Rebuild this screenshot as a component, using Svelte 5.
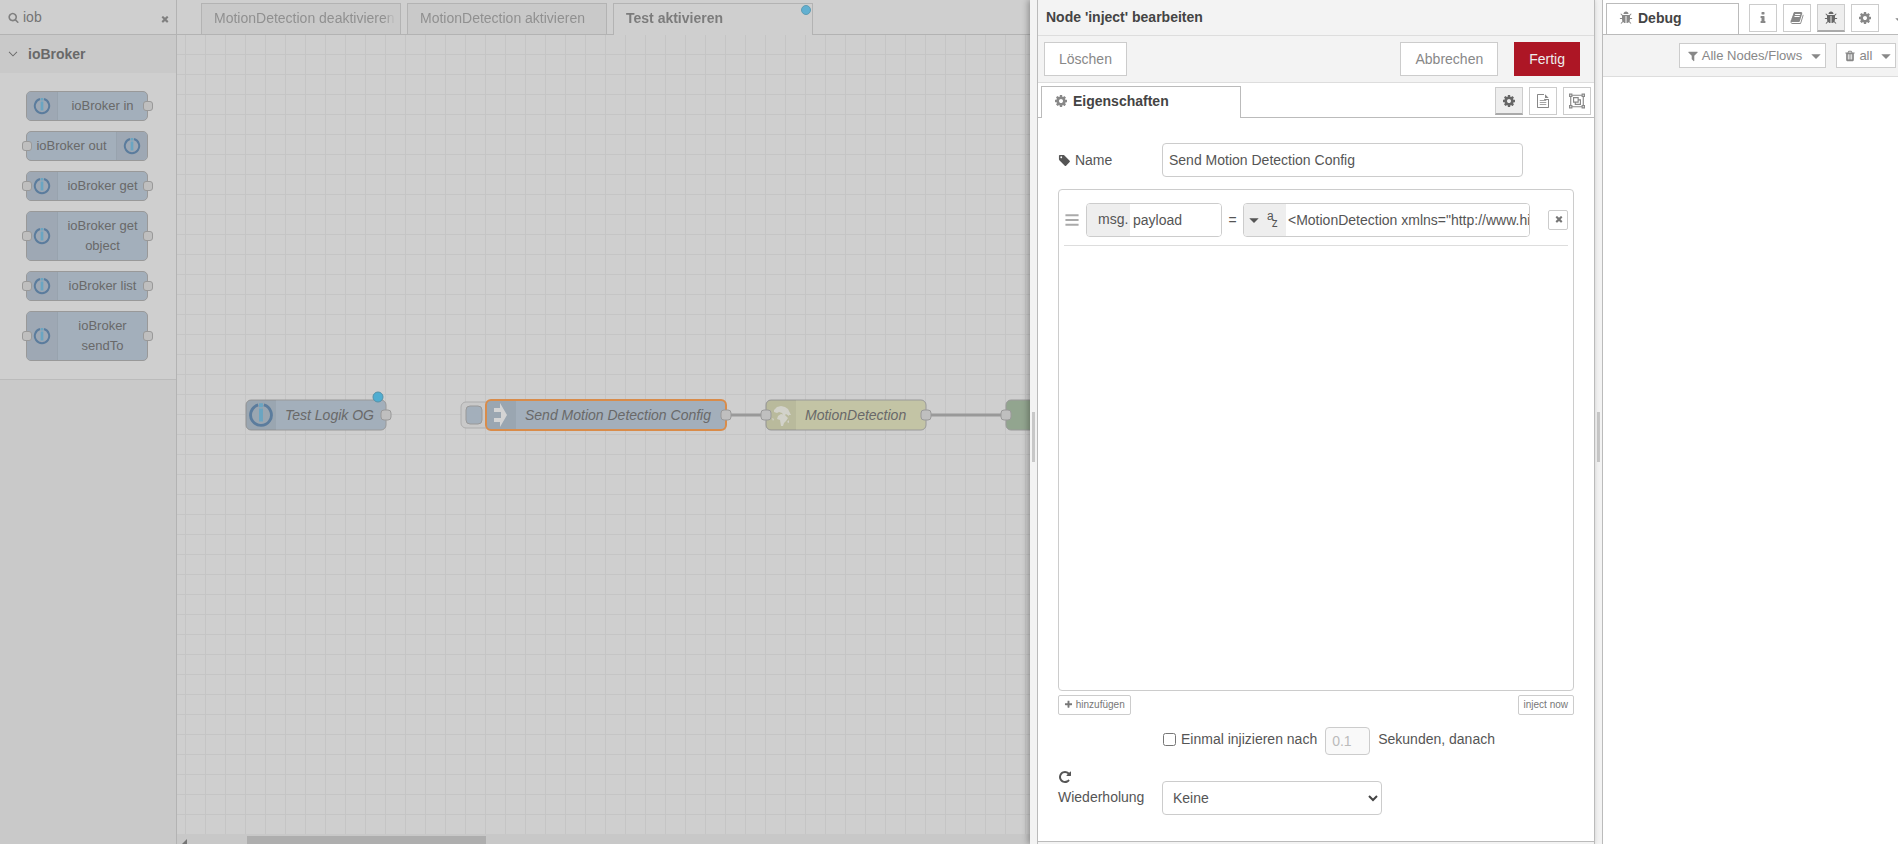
<script>
  const paths = {
    search:
      "M1216 832q0-185-131.5-316.5t-316.5-131.5-316.5 131.5-131.5 316.5 131.5 316.5 316.5 131.5 316.5-131.5 131.5-316.5zm512 832q0 52-38 90t-90 38q-54 0-90-38l-343-342q-179 124-399 124-143 0-273.5-55.5t-225-150-150-225-55.5-273.5 55.5-273.5 150-225 225-150 273.5-55.5 273.5 55.5 225 150 150 225 55.5 273.5q0 220-124 399l343 343q37 37 37 90z",
    times:
      "M1490 1322q0 40-28 68l-136 136q-28 28-68 28t-68-28l-294-294-294 294q-28 28-68 28t-68-28l-136-136q-28-28-28-68t28-68l294-294-294-294q-28-28-28-68t28-68l136-136q28-28 68-28t68 28l294 294 294-294q28-28 68-28t68 28l136 136q28 28 28 68t-28 68l-294 294 294 294q28 28 28 68z",
    cog: "M1152 896q0-106-75-181t-181-75-181 75-75 181 75 181 181 75 181-75 75-181zm512-109v222q0 12-8 23t-20 13l-185 28q-19 54-39 91 35 50 107 138 10 12 10 25t-9 23q-27 37-99 108t-94 71q-12 0-26-9l-138-108q-44 23-91 38-16 136-29 186-7 28-36 28h-222q-14 0-24.5-8.5t-11.5-21.5l-28-184q-49-16-90-37l-141 107q-10 9-25 9-14 0-25-11-126-114-165-168-7-10-7-23 0-12 8-23 15-21 51-66.5t54-70.5q-27-50-41-99l-183-27q-13-2-21-12.5t-8-23.5v-222q0-12 8-23t19-13l186-28q14-46 39-92-40-57-107-138-10-12-10-24 0-10 9-23 26-36 98.5-107.5t94.5-71.5q13 0 26 10l138 107q44-23 91-38 16-136 29-186 7-28 36-28h222q14 0 24.5 8.5t11.5 21.5l28 184q49 16 90 37l142-107q9-9 24-9 13 0 25 10 129 119 165 170 7 8 7 22 0 12-8 23-15 21-51 66.5t-54 70.5q26 50 41 98l183 28q13 2 21 12.5t8 23.5z",
    file: "M1596 476q14 14 28 36h-472v-472q22 14 36 28zm-476 164h544v1056q0 40-28 68t-68 28h-1344q-40 0-68-28t-28-68v-1600q0-40 28-68t68-28h800v544q0 40 28 68t68 28zm-864 1024h1280v-896h-416q-40 0-68-28t-28-68v-544h-768zM480 800h832v96h-832zM480 1056h832v96h-832zM480 1312h832v96h-832z",
    group:
      "M0 64h384v128h1024v-128h384v384h-128v896h128v384h-384v-128h-1024v128h-384v-384h128v-896h-128zM128 192v128h128v-128zM1536 192v128h128v-128zM128 1472v128h128v-128zM1536 1472v128h128v-128zM384 320v128h-128v896h128v128h1024v-128h128v-896h-128v-128zM448 448h640v256h256v640h-704v-256h-192zM576 576v384h384v-384zM1088 832v256h-320v128h448v-384z",
    tag: "M576 448q0-53-37.5-90.5t-90.5-37.5-90.5 37.5-37.5 90.5 37.5 90.5 90.5 37.5 90.5-37.5 37.5-90.5zm1067 576q0 53-37 90l-491 492q-39 37-91 37-53 0-90-37l-715-716q-38-37-64.5-101t-26.5-117v-416q0-52 38-90t90-38h416q53 0 117 26.5t102 64.5l715 714q37 39 37 91z",
    plus: "M1600 736v192q0 40-28 68t-68 28h-416v416q0 40-28 68t-68 28h-192q-40 0-68-28t-28-68v-416h-416q-40 0-68-28t-28-68v-192q0-40 28-68t68-28h416v-416q0-40 28-68t68-28h192q40 0 68 28t28 68v416h416q40 0 68 28t28 68z",
    repeat:
      "M1664 256v448q0 26-19 45t-45 19h-448q-42 0-59-40-17-39 14-69l138-138q-148-137-349-137-104 0-198.5 40.5t-163.5 109.5-109.5 163.5-40.5 198.5 40.5 198.5 109.5 163.5 163.5 109.5 198.5 40.5q119 0 225-52t179-147q7-10 23-12 15 0 25 9l137 138q9 8 9.5 20.5t-7.5 22.5q-109 132-264 204.5t-327 72.5q-156 0-298-61t-245-164-164-245-61-298 61-298 164-245 245-164 298-61q147 0 284.5 55.5t244.5 156.5l130-129q29-31 70-14 39 17 39 59z",
    bars: "M160 256h1472v224h-1472zM160 784h1472v224h-1472zM160 1312h1472v224h-1472z",
    bug: "M1696 960q0 26-19 45t-45 19h-224q0 171-67 290l208 209q19 19 19 45t-19 45q-18 19-45 19t-45-19l-198-197q-5 5-15 13t-42 28.5-65 36.5-82 29-97 13v-896h-128v896q-51 0-101.5-13.5t-87-33-66-39-43.5-32.5l-15-14-183 207q-20 21-48 21-24 0-43-16-19-18-20.5-44.5t15.5-46.5l202-227q-58-114-58-274h-224q-26 0-45-19t-19-45 19-45 45-19h224v-294l-173-173q-19-19-19-45t19-45 45-19 45 19l173 173h844l173-173q19-19 45-19t45 19 19 45-19 45l-173 173v294h224q26 0 45 19t19 45zm-480-576h-640q0-133 93.5-226.5t226.5-93.5 226.5 93.5 93.5 226.5z",
    info: "M1216 1344v128q0 26-19 45t-45 19h-512q-26 0-45-19t-19-45v-128q0-26 19-45t45-19h64v-384h-64q-26 0-45-19t-19-45v-128q0-26 19-45t45-19h384q26 0 45 19t19 45v576h64q26 0 45 19t19 45zm-128-1152v192q0 26-19 45t-45 19h-256q-26 0-45-19t-19-45v-192q0-26 19-45t45-19h256q26 0 45 19t19 45z",
    book: "M1703 478q40 57 18 129l-275 906q-19 64-76.5 107.5t-122.5 43.5h-923q-77 0-148.5-53.5t-99.5-131.5q-24-67-2-127 0-4 3-27t4-37q1-8-3-21.5t-3-19.5q2-11 8-21t16.5-23.5 16.5-23.5q23-38 45-91.5t30-91.5q3-10 .5-30t-.5-28q3-11 17-28t17-23q21-36 42-92t25-90q1-9-2.5-32t.5-28q4-13 22-30.5t22-22.5q19-26 42.5-84.5t27.5-96.5q1-8-3-25.5t-2-26.5q2-8 9-18t18-23 17-21q8-12 16.5-30.5t15-35 16-36 19.5-32 26.5-23.5 36-11.5 47.5 5.5l-1 3q38-9 51-9h761q74 0 114 56t18 130l-274 906q-36 119-71.5 153.5t-128.5 34.5h-869q-27 0-38 15-11 16-1 43 24 70 144 70h923q29 0 56-15.5t35-41.5l300-987q7-22 5-57 38 15 59 43zm-1064 2q-4 13 2 22.5t20 9.5h608q13 0 25.5-9.5t16.5-22.5l21-64q4-13-2-22.5t-20-9.5h-608q-13 0-25.5 9.5t-16.5 22.5zm-83 256q-4 13 2 22.5t20 9.5h608q13 0 25.5-9.5t16.5-22.5l21-64q4-13-2-22.5t-20-9.5h-608q-13 0-25.5 9.5t-16.5 22.5z",
    filter:
      "M1595 295q17 41-14 70l-493 493v742q0 42-39 59-13 5-25 5-27 0-45-19l-256-256q-19-19-19-45v-486l-493-493q-31-29-14-70 17-39 59-39h1280q42 0 59 39z",
    trash:
      "M704 1376v-704q0-14-9-23t-23-9h-64q-14 0-23 9t-9 23v704q0 14 9 23t23 9h64q14 0 23-9t9-23zm256 0v-704q0-14-9-23t-23-9h-64q-14 0-23 9t-9 23v704q0 14 9 23t23 9h64q14 0 23-9t9-23zm256 0v-704q0-14-9-23t-23-9h-64q-14 0-23 9t-9 23v704q0 14 9 23t23 9h64q14 0 23-9t9-23zm-544-992h448l-48-117q-7-9-17-11h-317q-10 2-17 11zm928 32v64q0 14-9 23t-23 9h-96v948q0 83-47 143.5t-113 60.5h-832q-66 0-113-58.5t-47-141.5v-952h-96q-14 0-23-9t-9-23v-64q0-14 9-23t23-9h309l70-167q15-37 54-63t79-26h320q40 0 79 26t54 63l70 167h309q14 0 23 9t9 23z",
    caret: "M192 640h1408l-704 704z",
    angle: "M256 620l90-90 550 550 550-550 90 90-640 640z",
  };

  let paletteNodes = [
    { label: "ioBroker in", input: false, output: true },
    { label: "ioBroker out", input: true, output: false, right: true },
    { label: "ioBroker get", input: true, output: true },
    { label: "ioBroker get object", input: true, output: true },
    { label: "ioBroker list", input: true, output: true },
    { label: "ioBroker sendTo", input: true, output: true },
  ];

  let flowTabs = ["MotionDetection deaktivieren", "MotionDetection aktivieren", "Test aktivieren"];
  let activeTab = 2;

  let search = "iob";
  let name = "Send Motion Detection Config";
  let property = "payload";
  let value = '<MotionDetection xmlns="http://www.hikvision.com/ver20/XMLSchema">';
  let once = false;
  let onceDelay = "0.1";
  let repeat = "none";

  let editTab = "cog";
  let sideTab = "bug";
</script>

{#snippet icon(id, size = 14)}
  <svg class="icon" width={size} height={size} viewBox="0 0 1792 1792" aria-hidden="true">
    <path d={paths[id]} fill="currentColor" fill-rule={id === "group" || id === "file" ? "evenodd" : "nonzero"} />
  </svg>
{/snippet}

{#snippet ring()}
  <path d="M7.800 2.300a8 8 0 1 0 4.400 0" fill="none" stroke="#5b7c9d" stroke-width="2.200" />
  <path d="M10 1v3M10 5v10" stroke="#6aa5c2" stroke-width="3" />
{/snippet}

{#snippet port(x)}
  <rect class="port" {x} y="375" width="10" height="10" rx="3" />
{/snippet}

<div class="editor">
  <aside class="palette">
    <div class="search">
      {@render icon("search", 11)}
      <input type="text" aria-label="Nodes filtern" bind:value={search} />
      <button aria-label="Filter leeren" on:click={() => (search = "")}>{@render icon("times", 10)}</button>
    </div>
    <div class="category">
      <button class="category-title">{@render icon("angle", 12)}<span>ioBroker</span></button>
      <div class="category-nodes">
        {#each paletteNodes as node}
          <div class="node" class:right={node.right}>
            <div class="node-icon">
              <svg width="18" height="18" viewBox="0 0 20 20">{@render ring()}</svg>
            </div>
            <div class="node-label">{node.label}</div>
            {#if node.input}<span class="node-port in"></span>{/if}
            {#if node.output}<span class="node-port out"></span>{/if}
          </div>
        {/each}
      </div>
    </div>
  </aside>

  <main class="workspace">
    <nav class="tabs">
      {#each flowTabs as tab, i}
        <button class="tab" class:active={i === activeTab} on:click={() => (activeTab = i)}>
          <span>{tab}</span>
          {#if i === 2}<i class="changed"></i>{/if}
        </button>
      {/each}
    </nav>
    <div class="canvas">
      <svg class="flow" width="100%" height="100%">
        <path class="wire" d="M550 380H589M750 380H829" />

        <g>
          <rect class="body blue" x="69" y="365" width="140" height="30" rx="5" />
          <path class="shade" d="M74 365h25v30h-25a5 5 0 0 1-5-5v-20a5 5 0 0 1 5-5z" />
          <svg x="71" y="367" width="26" height="26" viewBox="0 0 20 20">{@render ring()}</svg>
          <text x="108" y="385">Test Logik OG</text>
          {@render port(204)}
          <circle class="dot" cx="201" cy="362" r="5" />
        </g>

        <g>
          <rect class="button-frame" x="284" y="367" width="32" height="26" rx="5" />
          <rect class="body blue" x="289" y="371" width="16" height="18" rx="4" />
          <rect class="body blue selected" x="309" y="365" width="240" height="30" rx="5" />
          <path class="shade" d="M314 366h25v28h-25a4 4 0 0 1-4-4v-20a4 4 0 0 1 4-4z" />
          <path d="M317 373h6v-5l7 12-7 12v-5h-6v-4h7v-6h-7z" fill="#d4d4d4" />
          <text x="348" y="385">Send Motion Detection Config</text>
          {@render port(544)}
        </g>

        <g>
          <rect class="body yellow" x="589" y="365" width="160" height="30" rx="5" />
          <path class="shade" d="M594 365h25v30h-25a5 5 0 0 1-5-5v-20a5 5 0 0 1 5-5z" />
          <path
            d="M597 375l3-3 4-1 4 1 3 2 3 6-2 0 0 1-3-2-2 2-2-3-3-1-2 1-3-1zM601 381l3-2 4 1 3 3-2 3-2 2-1 3-2 0-1-6-3-1zM595 383l2 1-1 2zM610 387l2-2 0 3z"
            fill="#d2d2ca"
          />
          <text x="628" y="385">MotionDetection</text>
          {@render port(584)}
          {@render port(744)}
        </g>

        <g>
          <rect class="body green" x="829" y="365" width="140" height="30" rx="5" />
          {@render port(824)}
        </g>
      </svg>
    </div>
    <div class="scrollbar">
      <span class="scroll-arrow"></span>
      <span class="thumb"></span>
    </div>
  </main>

  <section class="tray">
    <div class="grip"><span></span></div>
    <div class="tray-main">
      <header class="tray-header">Node 'inject' bearbeiten</header>
      <div class="tray-toolbar">
        <button class="btn delete">Löschen</button>
        <button class="btn">Abbrechen</button>
        <button class="btn primary">Fertig</button>
      </div>
      <div class="panel-tabs edit-tabs">
        <button class="panel-tab">{@render icon("cog")}Eigenschaften</button>
        <div class="tab-icons">
          {#each ["cog", "file", "group"] as id}
            <button class="square" class:on={editTab === id} aria-label={id} on:click={() => (editTab = id)}>
              {@render icon(id, id === "group" ? 16 : 14)}
            </button>
          {/each}
        </div>
      </div>

      <form class="tray-body" on:submit|preventDefault>
        <div class="form-row">
          <label class="caption" for="node-name">{@render icon("tag", 13)} Name</label>
          <input id="node-name" class="field name" type="text" bind:value={name} />
        </div>

        <div class="rules">
          <div class="rule">
            <span class="drag">{@render icon("bars", 16)}</span>
            <div class="field typed prop">
              <span class="type">msg.</span>
              <input type="text" aria-label="Eigenschaft" bind:value={property} />
            </div>
            <span class="equals">=</span>
            <div class="field typed val">
              <button class="type" type="button" aria-label="Typ">
                {@render icon("caret", 12)}
                <span class="az"><span>a</span><span>z</span></span>
              </button>
              <input type="text" aria-label="Wert" bind:value />
            </div>
            <button class="small remove" type="button" aria-label="Entfernen">{@render icon("times", 10)}</button>
          </div>
        </div>

        <div class="list-actions">
          <button class="small" type="button">{@render icon("plus", 9)} hinzufügen</button>
          <button class="small" type="button">inject now</button>
        </div>

        <div class="once">
          <input id="once" type="checkbox" bind:checked={once} />
          <label for="once">Einmal injizieren nach</label>
          <input id="delay" class="field delay" type="text" disabled={!once} bind:value={onceDelay} />
          <label for="delay">Sekunden, danach</label>
        </div>

        <div class="form-row repeat">
          <label class="caption" for="repeat">{@render icon("repeat")}<br />Wiederholung</label>
          <div class="select">
            <select id="repeat" class="field" bind:value={repeat}>
              <option value="none">Keine</option>
              <option value="interval">Intervall</option>
            </select>
            <svg width="10" height="8" viewBox="0 0 10 8" aria-hidden="true">
              <path d="M1 2l4 4 4-4" fill="none" stroke="#444" stroke-width="2" />
            </svg>
          </div>
        </div>
      </form>
      <footer class="tray-footer"></footer>
    </div>
  </section>

  <div class="grip"><span></span></div>

  <aside class="sidebar">
    <div class="panel-tabs side-tabs">
      <button class="panel-tab">{@render icon("bug")}Debug</button>
      <div class="tab-icons">
        {#each ["info", "book", "bug", "cog"] as id}
          <button class="square" class:on={sideTab === id} aria-label={id} on:click={() => (sideTab = id)}>
            {@render icon(id)}
          </button>
        {/each}
      </div>
      <button class="more" aria-label="Mehr">{@render icon("caret", 12)}</button>
    </div>
    <div class="side-toolbar">
      <button class="filter">{@render icon("filter", 12)} Alle Nodes/Flows <span>{@render icon("caret", 12)}</span></button>
      <button class="filter">{@render icon("trash", 12)} all <span>{@render icon("caret", 12)}</span></button>
    </div>
  </aside>
</div>

<style>
  :global(body) {
    margin: 0;
  }

  * {
    box-sizing: border-box;
  }

  .editor {
    display: flex;
    height: 100vh;
    overflow: hidden;
    background: #fff;
    color: #555;
    font: 14px/20px "Liberation Sans", Arial, sans-serif;
  }

  button,
  input,
  select {
    font: inherit;
    color: inherit;
    margin: 0;
  }

  button {
    cursor: pointer;
    white-space: nowrap;
  }

  .icon {
    flex: none;
    vertical-align: -2px;
  }

  /* palette */
  .palette {
    flex: none;
    width: 177px;
    border-right: 1px solid #b3b3b3;
    background: #c9c9c9;
    color: #696969;
  }
  .search {
    display: flex;
    align-items: center;
    height: 35px;
    padding: 0 6px 0 8px;
    border-bottom: 1px solid #b3b3b3;
    background: #cfcfcf;
    color: #808080;
  }
  .search input {
    flex: 1;
    min-width: 0;
    padding: 0 4px;
    border: 0;
    outline: 0;
    background: none;
    color: #747474;
  }
  .search button {
    padding: 0;
    border: 0;
    background: none;
    line-height: 1;
  }
  .category {
    border-bottom: 1px solid #bbb;
    background: #cfcfcf;
  }
  .category-title {
    display: flex;
    align-items: center;
    gap: 9px;
    width: 100%;
    height: 38px;
    padding: 0 7px;
    border: 0;
    background: #c9c9c9;
    font-weight: bold;
  }
  .category-nodes {
    display: flex;
    flex-direction: column;
    align-items: center;
    gap: 10px;
    padding: 18px 2px 18px 0;
  }
  .node {
    position: relative;
    display: flex;
    width: 122px;
    border: 1px solid #999;
    border-radius: 5px;
    background: #a3afbb;
    font-size: 13px;
  }
  .node.right {
    flex-direction: row-reverse;
  }
  .node-icon {
    display: flex;
    flex: none;
    align-items: center;
    justify-content: center;
    width: 31px;
    border-right: 1px solid #98a3ae;
    border-radius: 4px 0 0 4px;
    background: #9ea8b4;
  }
  .right .node-icon {
    border-right: 0;
    border-left: 1px solid #98a3ae;
    border-radius: 0 4px 4px 0;
  }
  .node-label {
    flex: 1;
    padding: 4px 8px;
    text-align: center;
  }
  .right .node-label {
    padding: 4px 0;
  }
  .node-port {
    position: absolute;
    top: calc(50% - 5px);
    width: 10px;
    height: 10px;
    border: 1px solid #999;
    border-radius: 3px;
    background: #bfbfbf;
  }
  .in {
    left: -5px;
  }
  .out {
    right: -6px;
  }

  /* workspace */
  .workspace {
    display: flex;
    flex: 1;
    flex-direction: column;
    min-width: 0;
    background: #cfcfcf;
    color: #696969;
  }
  .tabs {
    display: flex;
    flex: none;
    gap: 6px;
    height: 35px;
    padding: 3px 0 0 24px;
    border-bottom: 1px solid #b3b3b3;
  }
  .tab {
    position: relative;
    flex: none;
    width: 200px;
    height: 31px;
    padding: 0 4px 2px 12px;
    overflow: hidden;
    border: 1px solid #b3b3b3;
    border-bottom: 0;
    background: #c9c9c9;
    color: #909090;
    text-align: left;
  }
  .tab span {
    display: block;
    overflow: hidden;
    mask-image: linear-gradient(to left, transparent, #000 12px);
  }
  .tab.active {
    height: 32px;
    padding-bottom: 3px;
    background: #cfcfcf;
    color: #7c7c7c;
    font-weight: bold;
  }
  .changed {
    position: absolute;
    top: 1px;
    right: 1px;
    width: 10px;
    height: 10px;
    border: 1px solid #5f9cb3;
    border-radius: 50%;
    background: #62b0d1;
  }
  .canvas {
    flex: 1;
    min-height: 0;
    background-image: linear-gradient(#c5c5c5 1px, transparent 1px),
      linear-gradient(90deg, #c5c5c5 1px, transparent 1px);
    background-size: 20px 20px;
    background-position: 8px 19px;
  }
  .flow {
    display: block;
    overflow: hidden;
  }
  .flow text {
    fill: #696969;
    font-size: 14px;
    font-style: italic;
  }
  .body {
    stroke: #999;
  }
  .blue {
    fill: #a3afbb;
  }
  .yellow {
    fill: #c3c4a5;
  }
  .green {
    fill: #92a58f;
  }
  .selected {
    stroke: #d98c4a;
    stroke-width: 2;
  }
  .shade {
    fill: #000;
    fill-opacity: 0.05;
  }
  .button-frame {
    fill: #c9c9c9;
    stroke: #adadad;
  }
  .port {
    fill: #bfbfbf;
    stroke: #999;
  }
  .wire {
    fill: none;
    stroke: #999;
    stroke-width: 3;
  }
  .dot {
    fill: #4fadd1;
    stroke: #5591a8;
  }
  .scrollbar {
    display: flex;
    flex: none;
    height: 10px;
    padding: 2px 0 0 5px;
    background: #c8c8c8;
  }
  .scroll-arrow {
    width: 5px;
    height: 10px;
    margin: 3px 60px 0 0;
    background: #757575;
    clip-path: polygon(100% 0, 100% 100%, 0 50%);
  }
  .thumb {
    width: 239px;
    background: #aeaeae;
  }

  /* grips between the panels */
  .grip {
    display: flex;
    flex: none;
    align-items: center;
    width: 8px;
    padding: 30px 0 0 2px;
    border-right: 1px solid #bbb;
    background: #f3f3f3;
  }
  .grip span {
    width: 3px;
    height: 50px;
    background: #c8c8c8;
  }

  /* edit tray */
  .tray {
    position: relative;
    display: flex;
    flex: none;
    width: 565px;
    border-right: 1px solid #bbb;
    box-shadow: -2px 0 6px rgba(0, 0, 0, 0.3);
  }
  .tray-main {
    display: flex;
    flex: 1;
    flex-direction: column;
    min-width: 0;
    background: #fff;
  }
  .tray-header {
    height: 36px;
    padding: 7px 8px;
    border-bottom: 1px solid #ddd;
    background: #f3f3f3;
    color: #444;
    font-weight: bold;
  }
  .tray-toolbar {
    display: flex;
    align-items: center;
    height: 47px;
    gap: 16px;
    padding: 0 14px 0 6px;
    border-bottom: 1px solid #ddd;
    background: #f3f3f3;
  }
  .btn {
    height: 34px;
    padding: 0 14px;
    border: 1px solid #ccc;
    background: #fff;
    color: #888;
  }
  .btn.delete {
    margin-right: auto;
  }
  .btn.primary {
    border-color: #ad1625;
    background: #ad1625;
    color: #eee;
  }
  .panel-tabs {
    display: flex;
    flex: none;
    height: 35px;
    padding: 3px 3px 0 3px;
    border-bottom: 1px solid #bbb;
    background: #fff;
  }
  .panel-tab {
    display: flex;
    flex: none;
    align-items: center;
    gap: 5px;
    height: 32px;
    padding: 0 12px 4px;
    border: 1px solid #bbb;
    border-bottom: 0;
    background: #fff;
    color: #444;
    font-weight: bold;
  }
  .panel-tab .icon,
  .square {
    color: #888;
  }
  .edit-tabs .panel-tab {
    width: 200px;
  }
  .tab-icons {
    display: flex;
    flex: none;
    gap: 6px;
    margin-left: auto;
    padding-top: 1px;
  }
  .square {
    display: flex;
    align-items: center;
    justify-content: center;
    width: 28px;
    height: 28px;
    padding: 0;
    border: 1px solid #ccc;
    background: #fff;
  }
  .square.on {
    border-bottom: 2px solid #aaa;
    background: #eee;
    color: #666;
  }

  .tray-body {
    display: flex;
    flex: 1;
    flex-direction: column;
    min-height: 0;
    padding: 25px 20px 26px;
  }
  .form-row {
    display: flex;
    align-items: center;
  }
  .caption {
    width: 104px;
  }
  .field {
    height: 34px;
    padding: 0 6px;
    border: 1px solid #ccc;
    border-radius: 4px;
    outline: 0;
    background: #fff;
  }
  .name {
    width: 361px;
  }
  .rules {
    flex: 1;
    margin-top: 12px;
    padding: 4px 5px;
    border: 1px solid #ccc;
    border-radius: 4px;
  }
  .rule {
    display: flex;
    align-items: center;
    height: 52px;
    border-bottom: 1px solid #ddd;
  }
  .drag {
    width: 22px;
    color: #aaa;
    line-height: 1;
  }
  .typed {
    display: flex;
    padding: 0;
    overflow: hidden;
  }
  .typed input {
    flex: 1;
    min-width: 0;
    padding: 0 0 0 3px;
    border: 0;
    outline: 0;
  }
  .type {
    display: flex;
    flex: none;
    align-items: center;
    gap: 7px;
    width: 42px;
    padding: 0 0 0 4px;
    border: 0;
    background: #eee;
  }
  .prop {
    width: 136px;
  }
  .prop .type {
    width: 43px;
    padding: 0 0 2px 11px;
  }
  .val {
    flex: 1;
    min-width: 0;
  }
  .val input {
    padding-left: 2px;
  }
  .az {
    display: flex;
    font-size: 12px;
    line-height: 12px;
  }
  .az span:first-child {
    padding-bottom: 8px;
  }
  .az span:last-child {
    padding-top: 7px;
    margin-left: -2px;
  }
  .equals {
    width: 21px;
    text-align: center;
  }
  .small {
    height: 20px;
    padding: 0 5px;
    border: 1px solid #ccc;
    border-radius: 2px;
    background: #fff;
    color: #777;
    font-size: 10px;
    line-height: 16px;
  }
  .small .icon {
    vertical-align: -1px;
  }
  .remove {
    width: 20px;
    margin-left: 18px;
  }
  .list-actions {
    display: flex;
    justify-content: space-between;
    margin-top: 4px;
  }
  .once {
    display: flex;
    align-items: center;
    gap: 5px;
    margin: 8px 0 0 105px;
  }
  .once input[type="checkbox"] {
    width: 13px;
    height: 13px;
  }
  .delay {
    width: 45px;
    height: 28px;
    margin: 4px 3px 0;
  }
  .delay:disabled {
    background: #f9f9f9;
    color: #bbb;
  }
  .repeat {
    align-items: flex-end;
    margin-top: 12px;
  }
  .repeat .caption {
    padding-bottom: 8px;
  }
  .select {
    position: relative;
  }
  .select select {
    width: 220px;
    padding: 0 10px;
    appearance: none;
  }
  .select svg {
    position: absolute;
    right: 4px;
    top: 13px;
    pointer-events: none;
  }
  .tray-footer {
    flex: none;
    height: 3px;
    border-top: 1px solid #bbb;
    background: #f3f3f3;
  }

  /* sidebar */
  .sidebar {
    flex: none;
    width: 295px;
  }
  .side-tabs {
    overflow: hidden;
  }
  .side-tabs .panel-tab {
    width: 133px;
  }
  .side-tabs .tab-icons {
    margin-left: 10px;
  }
  .more {
    flex: none;
    margin-left: 15px;
    padding: 0;
    border: 0;
    background: none;
    color: #888;
  }
  .side-toolbar {
    display: flex;
    align-items: center;
    justify-content: flex-end;
    gap: 10px;
    height: 42px;
    padding-right: 2px;
    border-bottom: 1px solid #ddd;
    background: #f3f3f3;
  }
  .filter {
    height: 25px;
    padding: 0 3px 0 7px;
    border: 1px solid #ccc;
    background: #fff;
    color: #888;
    font-size: 13px;
  }
  .filter span {
    margin-left: 4px;
  }
</style>
